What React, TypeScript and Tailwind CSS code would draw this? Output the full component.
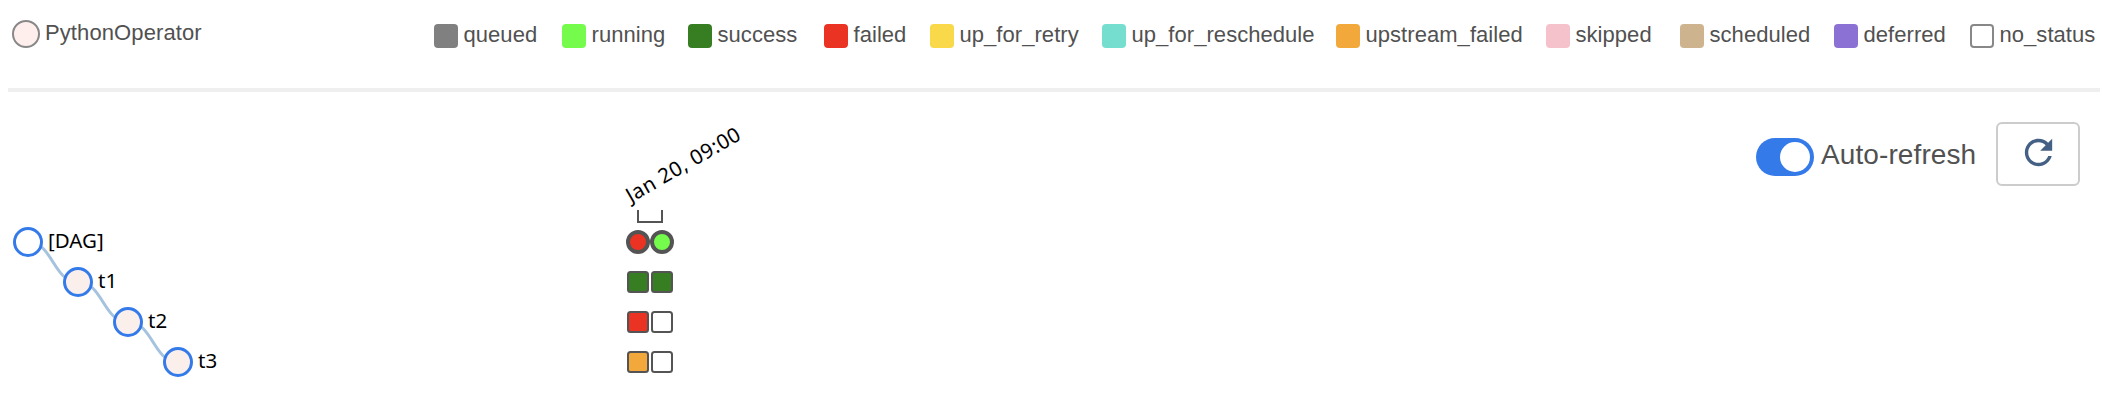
const states = [
  { name: "queued", item: "w-[128px]", swatch: "bg-[#808080]" },
  { name: "running", item: "w-[126px]", swatch: "bg-[#75fb4c]" },
  { name: "success", item: "w-[136px]", swatch: "bg-[#377e22]" },
  { name: "failed", item: "w-[106px]", swatch: "bg-[#ea3323]" },
  { name: "up_for_retry", item: "w-[172px]", swatch: "bg-[#f9d84a]" },
  { name: "up_for_reschedule", item: "w-[234px]", swatch: "bg-[#75decf]" },
  { name: "upstream_failed", item: "w-[210px]", swatch: "bg-[#f2a83b]" },
  { name: "skipped", item: "w-[134px]", swatch: "bg-[#f5c1cb]" },
  { name: "scheduled", item: "w-[154px]", swatch: "bg-[#cdb38e]" },
  { name: "deferred", item: "w-[136px]", swatch: "bg-[#8c71d4]" },
  { name: "no_status", item: "w-[130px]", swatch: "border-2 border-[#888] bg-white" },
];

const nodes = [
  { label: "[DAG]", x: 28, y: 150, fill: "#ffffff" },
  { label: "t1", x: 78, y: 190, fill: "#fbefec" },
  { label: "t2", x: 128, y: 230, fill: "#fbefec" },
  { label: "t3", x: 178, y: 270, fill: "#fbefec" },
];

const taskRuns = [
  { y: 190, fills: ["#377e22", "#377e22"] },
  { y: 230, fills: ["#ea3323", "#ffffff"] },
  { y: 270, fills: ["#f2a83b", "#ffffff"] },
];

function Legend() {
  return (
    <header className="ml-2 mr-3 flex h-[92px] justify-between border-b-4 border-[#efefef]">
      <div className="flex items-start pl-1 pt-5">
        <span className="size-7 rounded-full border-2 border-[#888] bg-[#feefec]" />
        <span className="ml-[5px] mt-[-1px] text-[22px] leading-7 tracking-[0.1px]">PythonOperator</span>
      </div>
      <div className="flex items-start pt-6">
        {states.map((s) => (
          <div key={s.name} className={`flex shrink-0 items-start ${s.item}`}>
            <span className={`size-6 shrink-0 rounded ${s.swatch}`} />
            <span className="ml-[5.5px] mt-[-3px] h-6 text-[22px] leading-7 tracking-[0.05px]">{s.name}</span>
          </div>
        ))}
      </div>
    </header>
  );
}

function TreeView() {
  return (
    <svg width="800" height="324" className="block shrink-0" fontFamily='"Noto Sans", sans-serif' fontSize="20.5">
      {nodes.slice(1).map((n, i) => {
        const p = nodes[i];
        const mid = (p.x + n.x) / 2;
        return (
          <path
            key={n.label}
            d={`M${p.x},${p.y}C${mid},${p.y} ${mid},${n.y} ${n.x},${n.y}`}
            fill="none"
            stroke="#a5c2df"
            strokeWidth="3"
          />
        );
      })}
      {nodes.map((n) => (
        <g key={n.label}>
          <circle cx={n.x} cy={n.y} r="13.5" fill={n.fill} stroke="#347ae9" strokeWidth="3" />
          <text x={n.x + 20} y={n.y + 6}>
            {n.label}
          </text>
        </g>
      ))}
      <text transform="translate(631 111) rotate(-30)" letterSpacing="0.55">
        Jan 20, 09:00
      </text>
      <path d="M638 118v12h24v-12" fill="none" stroke="#545454" strokeWidth="2" />
      <circle cx="638" cy="150" r="10" fill="#ea3323" stroke="#545454" strokeWidth="4" />
      <circle cx="662" cy="150" r="10" fill="#75fb4c" stroke="#545454" strokeWidth="4" />
      {taskRuns.map((row) =>
        row.fills.map((fill, i) => (
          <rect
            key={`${row.y}-${i}`}
            x={628 + i * 24}
            y={row.y - 10}
            width="20"
            height="20"
            rx="2.5"
            fill={fill}
            stroke="#545454"
            strokeWidth="2"
          />
        )),
      )}
    </svg>
  );
}

function Controls() {
  return (
    <div className="flex items-start pr-8 pt-[30px]">
      <button type="button" aria-label="Auto-refresh" className="mt-4 flex h-[38px] w-[58px] justify-end rounded-full bg-[#347ae9] p-1">
        <span className="size-[30px] rounded-full bg-white" />
      </button>
      <span className="ml-[7px] mt-[15px] w-[175px] text-[28px] leading-9 tracking-[0.1px]">Auto-refresh</span>
      <button type="button" aria-label="Refresh" className="flex h-16 w-[84px] items-start justify-center rounded-md border-2 border-[#ccc] bg-white pl-px pt-2">
        <svg width="41" height="41" viewBox="0 0 24 24" fill="#446084">
          <path d="M17.65 6.35C16.2 4.9 14.21 4 12 4c-4.42 0-7.99 3.58-7.99 8s3.57 8 7.99 8c3.73 0 6.84-2.55 7.73-6h-2.08c-.82 2.33-3.04 4-5.65 4-3.31 0-6-2.69-6-6s2.69-6 6-6c1.66 0 3.14.69 4.22 1.78L13 11h7V4l-2.35 2.35z" />
        </svg>
      </button>
    </div>
  );
}

export default function App() {
  return (
    <div className="h-[416px] w-[2112px] overflow-hidden bg-white font-['Liberation_Sans',Arial,sans-serif] text-[#515151]">
      <Legend />
      <main className="flex justify-between">
        <TreeView />
        <Controls />
      </main>
    </div>
  );
}
